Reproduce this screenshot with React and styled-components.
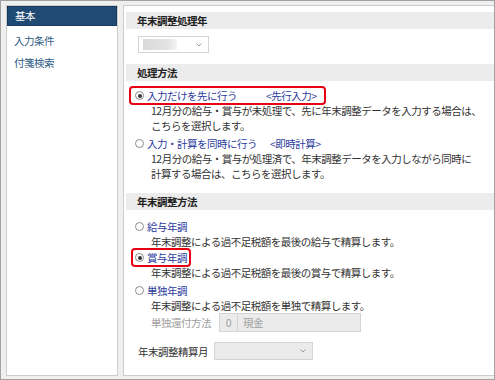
import React from 'react'
import styled, { createGlobalStyle } from 'styled-components'

const GlobalStyle = createGlobalStyle`
	html, body {
		margin: 0;
		padding: 0;
		background: #ffffff;
	}
	body {
		font-family: 'Noto Sans CJK JP', 'Noto Sans', sans-serif;
		font-size: 10.5px;
		letter-spacing: -0.5px;
		line-height: 15px;
		color: #333333;
	}
	* {
		box-sizing: border-box;
	}
`

const Frame = styled.div`
	display: flex;
	gap: 5px;
	width: 495px;
	height: 380px;
	padding: 4px 0 3px 5px;
	border: 1px solid #a2a2a2;
	background: #efefef;
`

const Sidebar = styled.nav`
	display: flex;
	flex-direction: column;
	width: 112px;
	border: 1px solid #cdcdcd;
	background: #ffffff;
`

const NavItem = styled.div`
	height: ${(p) => (p.$active ? '20px' : '22px')};
	margin-bottom: ${(p) => (p.$active ? '4px' : '0')};
	padding-left: 7px;
	line-height: ${(p) => (p.$active ? '18px' : '22px')};
	color: ${(p) => (p.$active ? '#ffffff' : '#2f5d86')};
	background: ${(p) => (p.$active ? '#1f4a73' : 'transparent')};
	border: ${(p) => (p.$active ? '1px dotted #0d2a46' : 'none')};
`

const Main = styled.main`
	flex: 1;
	display: flex;
	flex-direction: column;
	padding: 6px 0 0 2px;
	border: 1px solid #cdcdcd;
	border-right: none;
	background: #ffffff;
`

const SectionHeader = styled.div`
	height: 17px;
	padding-left: 11px;
	line-height: 17px;
	font-weight: bold;
	color: #222222;
	background: #ececec;
	margin-top: ${(p) => p.$top || 0}px;
`

const Select = styled.div`
	display: flex;
	align-items: center;
	justify-content: space-between;
	width: ${(p) => p.$width}px;
	height: ${(p) => p.$height || 17}px;
	padding: 0 6px 0 4px;
	border: 1px solid #d4d4d4;
	background: ${(p) => (p.$disabled ? '#ebebeb' : '#ffffff')};
`

const Blur = styled.div`
	width: 34px;
	height: 11px;
	background: linear-gradient(90deg, #d9d9d9, #e2e2e2 70%, #f4f4f4);
	filter: blur(0.6px);
`

const Chevron = () => (
	<svg width="6" height="4" viewBox="0 0 6 4">
		<path d="M0.5 0.5 L3 3 L5.5 0.5" fill="none" stroke="#9a9a9a" strokeWidth="1" />
	</svg>
)

const FieldBlock = styled.div`
	padding: 7px 0 0 12px;
`

const Options = styled.div`
	display: flex;
	flex-direction: column;
	padding-left: 9px;
	margin-top: ${(p) => p.$top || 0}px;
`

const Option = styled.div`
	margin-top: ${(p) => p.$gap || 0}px;
`

const OptionRow = styled.div`
	position: relative;
	display: flex;
	align-items: center;
	gap: 3px;
	height: 15px;
	color: #2b3b9c;
`

const Highlight = styled.span`
	position: absolute;
	left: ${(p) => p.$left || -6}px;
	top: -2px;
	width: ${(p) => p.$width}px;
	height: 19px;
	border: 2.5px solid #e60012;
	border-radius: 4px;
`

const Radio = styled.span`
	display: inline-flex;
	align-items: center;
	justify-content: center;
	width: 9px;
	height: 9px;
	border: 1px solid #8c8c8c;
	border-radius: 50%;
	background: #ffffff;
	&::after {
		content: '';
		display: ${(p) => (p.$checked ? 'block' : 'none')};
		width: 4px;
		height: 4px;
		border-radius: 50%;
		background: #333333;
	}
`

const Tag = styled.span`
	margin-left: ${(p) => p.$gap}px;
`

const Desc = styled.div`
	padding-left: 16px;
	line-height: 15px;
	color: #333333;
`

const InlineField = styled.div`
	display: flex;
	align-items: center;
	gap: ${(p) => p.$gap}px;
	padding-left: ${(p) => p.$indent}px;
	margin-top: ${(p) => p.$top}px;
	color: ${(p) => (p.$muted ? '#a0a0a0' : '#333333')};
`

const Combo = styled.div`
	display: flex;
	height: 19px;
	border: 1px solid #d4d4d4;
	background: #ebebeb;
	color: #a0a0a0;
`

const ComboCode = styled.span`
	width: 18px;
	text-align: center;
	line-height: 17px;
	border-right: 1px solid #d4d4d4;
`

const ComboText = styled.span`
	width: 122px;
	padding-left: 5px;
	line-height: 17px;
`

export default function App() {
	return (
		<>
			<GlobalStyle />
			<Frame>
				<Sidebar>
					<NavItem $active>基本</NavItem>
					<NavItem>入力条件</NavItem>
					<NavItem>付箋検索</NavItem>
				</Sidebar>
				<Main>
					<SectionHeader>年末調整処理年</SectionHeader>
					<FieldBlock>
						<Select $width={71}>
							<Blur />
							<Chevron />
						</Select>
					</FieldBlock>

					<SectionHeader $top={11}>処理方法</SectionHeader>
					<Options $top={7}>
						<Option>
							<OptionRow>
								<Highlight $width={197} />
								<Radio $checked />
								<span>入力だけを先に行う</span>
								<Tag $gap={26}>&lt;先行入力&gt;</Tag>
							</OptionRow>
							<Desc>
								12月分の給与・賞与が未処理で、先に年末調整データを入力する場合は、
								<br />
								こちらを選択します。
							</Desc>
						</Option>
						<Option $gap={3}>
							<OptionRow>
								<Radio />
								<span>入力・計算を同時に行う</span>
								<Tag $gap={10}>&lt;即時計算&gt;</Tag>
							</OptionRow>
							<Desc>
								12月分の給与・賞与が処理済で、年末調整データを入力しながら同時に
								<br />
								計算する場合は、こちらを選択します。
							</Desc>
						</Option>
					</Options>

					<SectionHeader $top={12}>年末調整方法</SectionHeader>
					<Options $top={9}>
						<Option>
							<OptionRow>
								<Radio />
								<span>給与年調</span>
							</OptionRow>
							<Desc>年末調整による過不足税額を最後の給与で精算します。</Desc>
						</Option>
						<Option $gap={1}>
							<OptionRow>
								<Highlight $left={-4} $width={60} />
								<Radio $checked />
								<span>賞与年調</span>
							</OptionRow>
							<Desc>年末調整による過不足税額を最後の賞与で精算します。</Desc>
						</Option>
						<Option $gap={3}>
							<OptionRow>
								<Radio />
								<span>単独年調</span>
							</OptionRow>
							<Desc>年末調整による過不足税額を単独で精算します。</Desc>
						</Option>
						<InlineField $muted $indent={16} $gap={8} $top={0}>
							<span>単独還付方法</span>
							<Combo>
								<ComboCode>0</ComboCode>
								<ComboText>現金</ComboText>
							</Combo>
						</InlineField>
					</Options>
					<InlineField $indent={12} $gap={6} $top={10}>
						<span>年末調整精算月</span>
						<Select $width={99} $height={18} $disabled>
							<span />
							<Chevron />
						</Select>
					</InlineField>
				</Main>
			</Frame>
		</>
	)
}
